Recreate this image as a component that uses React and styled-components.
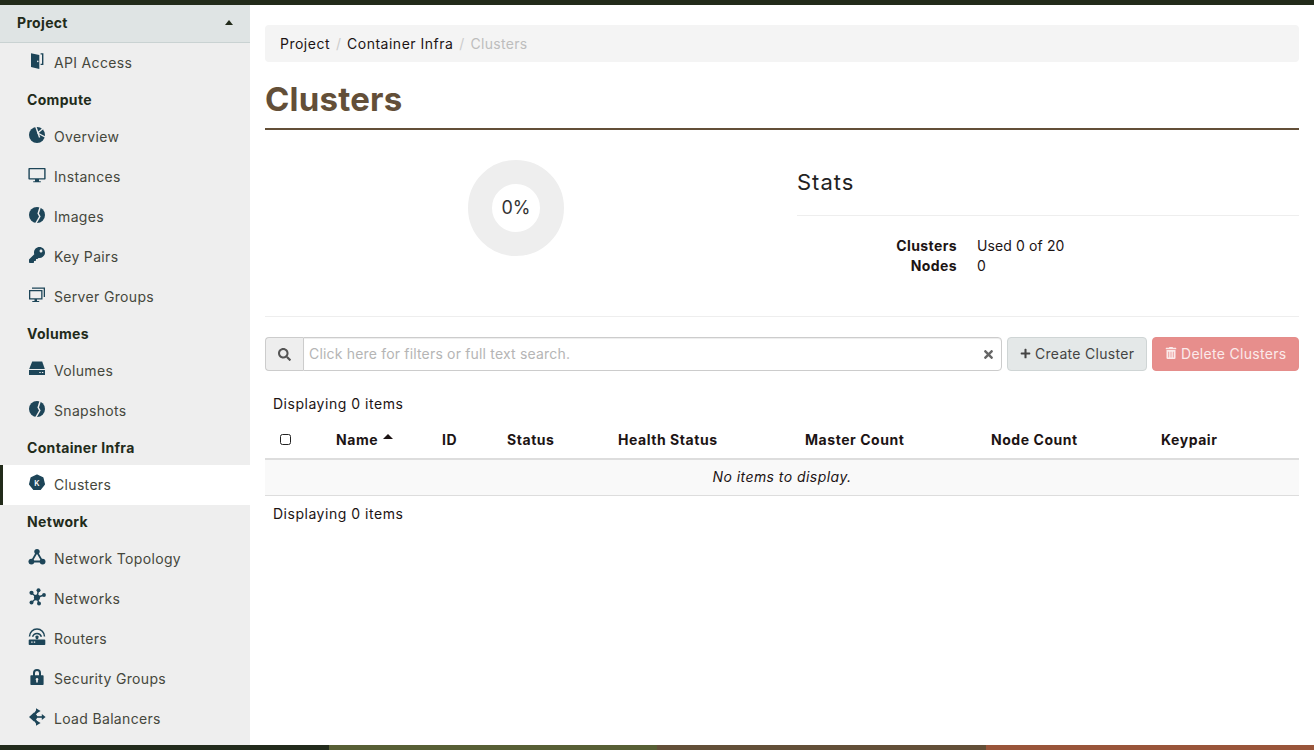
import React from "react";
import styled, { createGlobalStyle } from "styled-components";
import { FaKey, FaSearch, FaTimes, FaPlus, FaTrashAlt } from "react-icons/fa";

const Global = createGlobalStyle`
  html, body { margin: 0; padding: 0; height: 100%; overflow: hidden; background: #fff; }
  body { font-family: Inter, "Liberation Sans", sans-serif; font-size: 14px; letter-spacing: .55px; color: #1c1414; }
  * { box-sizing: border-box; }
`;

const Page = styled.div`
  height: 750px; display: flex; flex-direction: column;
`;
const TopBar = styled.div`height: 5px; background: #222b1a; flex: none;`;
const BottomBar = styled.div`height: 5px; flex: none; display: grid; grid-template-columns: repeat(4, 1fr);`;
const BarSegment = styled.div`background: ${p => p.$c};`;
const Body = styled.div`flex: 1; display: flex; min-height: 0;`;

const Sidebar = styled.nav`width: 250px; flex: none; background: #eee; overflow: hidden; letter-spacing: .33px;`;
const ProjectHeader = styled.div`
  height: 38px; background: #dfe4e4; border-bottom: 1px solid #c9d2d2;
  display: flex; align-items: center; justify-content: space-between;
  padding: 0 17px 2px 17px; font-weight: 700; color: #222b1a;
`;
const Caret = styled.span`
  width: 0; height: 0; border-left: 4.5px solid transparent; border-right: 4.5px solid transparent;
  border-bottom: 5px solid #222b1a;
`;
const GroupTitle = styled.div`
  height: 34px; display: flex; align-items: center; padding: 0 0 2px 27px;
  font-weight: 700; color: #222b1a;
`;
const Item = styled.a`
  height: 40px; display: flex; align-items: center; color: #45473c; padding-bottom: 2px;
  padding-left: ${p => (p.$active ? "25px" : "28px")};
  ${p => p.$active && "background:#fff; border-left: 3px solid #222b1a;"}
`;
const IconBox = styled.span`
  width: 18px; height: 18px; margin-right: 8px; flex: none; display: flex; align-items: center; justify-content: center;
  color: #1d4558; position: relative; top: -1px;
  svg { display: block; }
`;

const Main = styled.main`flex: 1; min-width: 0; padding: 20px 15px 0;`;
const Crumbs = styled.div`
  height: 37px; background: #f4f4f4; border-radius: 4px; display: flex; align-items: center; padding: 0 15px;
  color: #1c1414; letter-spacing: .5px;
`;
const CrumbSep = styled.span`color: #ccc; padding: 0 6px; letter-spacing: 0;`;
const CrumbCurrent = styled.span`color: #bdbdbd; letter-spacing: .33px;`;
const Title = styled.h1`
  margin: 0; height: 68px; padding-top: 18px; border-bottom: 2px solid #634f38;
  color: #634f38; font-size: 33px; line-height: 38px; font-weight: 700; letter-spacing: .2px;
`;
const Overview = styled.section`
  height: 187px; border-bottom: 1px solid #eee; display: grid; grid-template-columns: 502px 1fr; column-gap: 30px;
`;
const PieCell = styled.div`display: flex; justify-content: center; padding-top: 30px; letter-spacing: 0;`;
const StatsCell = styled.div`padding-top: 36px;`;
const StatsTitle = styled.h3`
  margin: 0; font-size: 22px; line-height: 32px; font-weight: 400; color: #222; height: 50px; border-bottom: 1px solid #eee; letter-spacing: 1px;
`;
const StatList = styled.dl`
  margin: 20px 0 0; display: grid; grid-template-columns: 160px 1fr; column-gap: 20px; line-height: 20px;
`;
const StatKey = styled.dt`font-weight: 700; text-align: right; letter-spacing: .4px;`;
const StatVal = styled.dd`margin: 0; letter-spacing: .12px;`;

const Toolbar = styled.div`display: flex; gap: 5px; margin-top: 20px; height: 34px;`;
const SearchGroup = styled.div`flex: 1; display: flex; min-width: 0;`;
const SearchAddon = styled.span`
  width: 38px; flex: none; background: #eee; border: 1px solid #ccc; border-right: 0; border-radius: 4px 0 0 4px;
  display: flex; align-items: center; justify-content: center; color: #555;
`;
const SearchBox = styled.div`
  flex: 1; border: 1px solid #ccc; border-radius: 0 4px 4px 0; display: flex; align-items: center;
  padding: 0 6px 0 5px; box-shadow: inset 0 1px 1px rgba(0,0,0,.075); color: #666;
`;
const SearchInput = styled.input`
  flex: 1; border: 0; outline: 0; background: transparent; font: inherit; letter-spacing: .18px; padding: 0 0 2px;
  &::placeholder { color: #b5b5b5; opacity: 1; }
`;
const Button = styled.button`
  font: inherit; letter-spacing: .3px; border-radius: 4px; height: 34px; width: ${p => p.$w}px; padding: 0 0 2px 12px; display: flex; align-items: center; gap: 4px;
  border: 1px solid ${p => (p.$danger ? "#e58d8b" : "#cfd5d5")};
  background: ${p => (p.$danger ? "#e78e8c" : "#e4e8e8")};
  color: ${p => (p.$danger ? "#fbeaea" : "#444")};
`;
const Count = styled.div`padding: 0 8px; line-height: 20px; margin-top: ${p => p.$mt}px; letter-spacing: .52px;`;
const Row = styled.div`
  display: grid; grid-template-columns: 63px 106px 65px 111px 187px 186px 170px 1fr;
`;
const HeadRow = styled(Row)`
  margin-top: 8px; height: 38px; border-bottom: 2px solid #ddd; align-items: center; font-weight: 700; padding-bottom: 2px;
`;
const HeadCell = styled.div`padding-left: 8px; display: flex; align-items: center; gap: 5px;`;
const CheckCell = styled.div`padding-left: 15px; display: flex; align-items: center;`;
const Check = styled.span`width: 11px; height: 11px; border: 1.5px solid #222; border-radius: 2.5px; display: block;`;
const SortCaret = styled.span`
  width: 0; height: 0; border-left: 5px solid transparent; border-right: 5px solid transparent;
  border-bottom: 5px solid #1c1414; margin-top: -5px;
`;
const EmptyRow = styled.div`
  height: 36px; background: #f9f9f9; border-bottom: 1px solid #ddd; display: flex; align-items: center; justify-content: center;
  font-style: italic; padding-bottom: 2px; letter-spacing: .45px;
`;

const S = ({ children }) => (
  <svg width={18} height={18} viewBox="0 0 18 18" fill="currentColor">{children}</svg>
);
const BG = "#eee";
const Door = () => (
  <S>
    <path d="M3 1.2 11.3 3v14L3 15z" />
    <path d="M12.6 1.3h2.8V13h-2.8v-1.3h1.4V2.6h-1.4z" />
    <circle cx="9.8" cy="9.4" r=".8" fill={BG} />
  </S>
);
const PieIcon = () => (
  <S>
    <circle cx="9" cy="9" r="8" />
    <g stroke={BG} strokeWidth="1.4" fill="none">
      <path d="M7.6 0 11.6 11.5" />
      <path d="M15.5 2 9.6 7" />
      <path d="M9.6 7 18 11.5" />
    </g>
  </S>
);
const MonitorIcon = () => (
  <S>
    <path fillRule="evenodd" d="M1.2 2h15.6a.8.8 0 0 1 .8.8v10a.8.8 0 0 1-.8.8H11v1.6h1.8v1H5.2v-1H7v-1.6H1.2a.8.8 0 0 1-.8-.8v-10a.8.8 0 0 1 .8-.8zM1.8 3.3v9h14.4v-9z" />
  </S>
);
const CrackDisc = () => (
  <S>
    <circle cx="9" cy="9" r="8" />
    <path d="M12.5 0 10.2 7.5 11.8 10.5 7.5 18" fill="none" stroke={BG} strokeWidth="1.5" />
  </S>
);
const Monitors = () => (
  <S>
    <path d="M4 1.5h13v9.5h-1.3V2.8H4z" />
    <path fillRule="evenodd" d="M1 4h13.5v9.5H9v1.4h2.2v1.1H4.3v-1.1h2.2v-1.4H1zm1.3 1.3v6.9h10.9V5.3z" />
  </S>
);
const HddIcon = () => (
  <S>
    <path d="M4.2 1.5h10L16.8 9H1.2z" />
    <path fillRule="evenodd" d="M1 10h16v5H1zM11.3 11.9v1.2h1.4v-1.2zm2.6 0v1.2h1.4v-1.2z" />
  </S>
);
const LockIcon = () => (
  <S>
    <path fillRule="evenodd" d="M3.2 7.2H5V5a4 4 0 0 1 8 0v2.2h1.8a.8.8 0 0 1 .8.8v8.2a.8.8 0 0 1-.8.8H3.2a.8.8 0 0 1-.8-.8V8a.8.8 0 0 1 .8-.8zM7 7.2h4V5a2 2 0 0 0-4 0zM9 10a1.4 1.4 0 0 0-.8 2.5v2h1.6v-2A1.4 1.4 0 0 0 9 10z" />
  </S>
);
const Hexagon = () => (
  <svg width="18" height="18" viewBox="0 0 18 18">
    <path fill="currentColor" stroke="currentColor" strokeWidth="1.4" strokeLinejoin="round" d="M9 1.2 14.8 4l1.5 6.2-4 5-6.6 0-4-5L3.2 4z" />
    <text x="9" y="11.5" textAnchor="middle" fontSize="7.5" fontWeight="600" fill="#fff" fontFamily="Inter, sans-serif" letterSpacing="0">K</text>
  </svg>
);
const Topology = () => (
  <S>
    <path d="M9 4 3.5 13.5h11z" fill="none" stroke="currentColor" strokeWidth="1.8" />
    <circle cx="9" cy="3.6" r="2.7" /><circle cx="3.4" cy="13.6" r="2.9" /><circle cx="14.6" cy="13.6" r="2.9" />
  </S>
);
const NetworkIcon = () => (
  <S>
    <path d="M9 9.5 10.5 2M9 9.5 3.5 5M9 9.5 16 7M9 9.5 3.5 14.5M9 9.5 11 15.5" stroke="currentColor" strokeWidth="1.4" />
    <circle cx="10.5" cy="2.2" r="2" /><circle cx="3.5" cy="4.8" r="2.1" /><circle cx="16" cy="7" r="1.9" />
    <circle cx="3.5" cy="14.6" r="2" /><circle cx="11" cy="15.6" r="2" /><circle cx="9" cy="9.5" r="3.1" />
  </S>
);
const Router = () => (
  <S>
    <path d="M1.5 8.6A7.5 7.5 0 0 1 16.5 8.6" fill="none" stroke="currentColor" strokeWidth="1.5" />
    <path d="M4.6 8.8A4.6 4.6 0 0 1 13.4 8.8" fill="none" stroke="currentColor" strokeWidth="1.5" />
    <path d="M7.3 8.8a1.8 1.8 0 0 1 3.4 0l-.7 2.4H8z" />
    <path fillRule="evenodd" d="M1.5 11.6h15a.8.8 0 0 1 .8.8v3.8a.8.8 0 0 1-.8.8h-15a.8.8 0 0 1-.8-.8v-3.8a.8.8 0 0 1 .8-.8zM3.2 13.6v1.2h1.4v-1.2zm2.6 0v1.2h1.4v-1.2z" />
  </S>
);
const Balancer = () => (
  <S>
    <path d="M1 9 6 4.6c1.6 1 3 2.6 3.4 4.4-.4 1.8-1.8 3.4-3.4 4.4z" />
    <path d="M6.5 6.5 9 3M6.5 11.5 9 15" fill="none" stroke="currentColor" strokeWidth="2.2" />
    <path d="M8 .3 12.6 3 8 5.7zM8 12.3 12.6 15 8 17.7z" />
    <path d="M8 9H15" stroke="currentColor" strokeWidth="1.6" />
    <path d="M13.8 6 17.6 9 13.8 12z" />
  </S>
);

const nav = [
  { t: "API Access", i: <Door /> },
  { g: "Compute" },
  { t: "Overview", i: <PieIcon /> },
  { t: "Instances", i: <MonitorIcon /> },
  { t: "Images", i: <CrackDisc /> },
  { t: "Key Pairs", i: <FaKey size={16} /> },
  { t: "Server Groups", i: <Monitors /> },
  { g: "Volumes" },
  { t: "Volumes", i: <HddIcon /> },
  { t: "Snapshots", i: <CrackDisc /> },
  { g: "Container Infra" },
  { t: "Clusters", i: <Hexagon />, active: true },
  { g: "Network" },
  { t: "Network Topology", i: <Topology /> },
  { t: "Networks", i: <NetworkIcon /> },
  { t: "Routers", i: <Router /> },
  { t: "Security Groups", i: <LockIcon /> },
  { t: "Load Balancers", i: <Balancer /> },
];
const heads = ["Name", "ID", "Status", "Health Status", "Master Count", "Node Count", "Keypair"];

export default function App() {
  return (
    <Page>
      <Global />
      <TopBar />
      <Body>
        <Sidebar>
          <ProjectHeader>Project<Caret /></ProjectHeader>
          {nav.map(n =>
            n.g ? <GroupTitle key={n.g}>{n.g}</GroupTitle> : (
              <Item key={n.t} $active={n.active}><IconBox>{n.i}</IconBox>{n.t}</Item>
            )
          )}
        </Sidebar>
        <Main>
          <Crumbs>
            <span>Project</span><CrumbSep>/</CrumbSep>
            <span>Container Infra</span><CrumbSep>/</CrumbSep>
            <CrumbCurrent>Clusters</CrumbCurrent>
          </Crumbs>
          <Title>Clusters</Title>
          <Overview>
            <PieCell>
              <svg width="96" height="96" viewBox="0 0 96 96">
                <circle cx="48" cy="48" r="36" fill="none" stroke="#eee" strokeWidth="24" />
                <text x="48" y="54" textAnchor="middle" fontSize="18" fill="#333" fontFamily="Inter, sans-serif">0%</text>
              </svg>
            </PieCell>
            <StatsCell>
              <StatsTitle>Stats</StatsTitle>
              <StatList>
                <StatKey>Clusters</StatKey><StatVal>Used 0 of 20</StatVal>
                <StatKey>Nodes</StatKey><StatVal>0</StatVal>
              </StatList>
            </StatsCell>
          </Overview>
          <Toolbar>
            <SearchGroup>
              <SearchAddon><FaSearch size={13} /></SearchAddon>
              <SearchBox>
                <SearchInput placeholder="Click here for filters or full text search." readOnly />
                <FaTimes size={13} />
              </SearchBox>
            </SearchGroup>
            <Button $w={140}><FaPlus size={11} />Create Cluster</Button>
            <Button $danger $w={147}><FaTrashAlt size={12} />Delete Clusters</Button>
          </Toolbar>
          <Count $mt={23}>Displaying 0 items</Count>
          <HeadRow>
            <CheckCell><Check /></CheckCell>
            {heads.map((h, i) => (
              <HeadCell key={h}>{h}{i === 0 && <SortCaret />}</HeadCell>
            ))}
          </HeadRow>
          <EmptyRow>No items to display.</EmptyRow>
          <Count $mt={8}>Displaying 0 items</Count>
        </Main>
      </Body>
      <BottomBar>
        {["#222b1c", "#575f35", "#634f38", "#99553a"].map(c => <BarSegment key={c} $c={c} />)}
      </BottomBar>
    </Page>
  );
}
